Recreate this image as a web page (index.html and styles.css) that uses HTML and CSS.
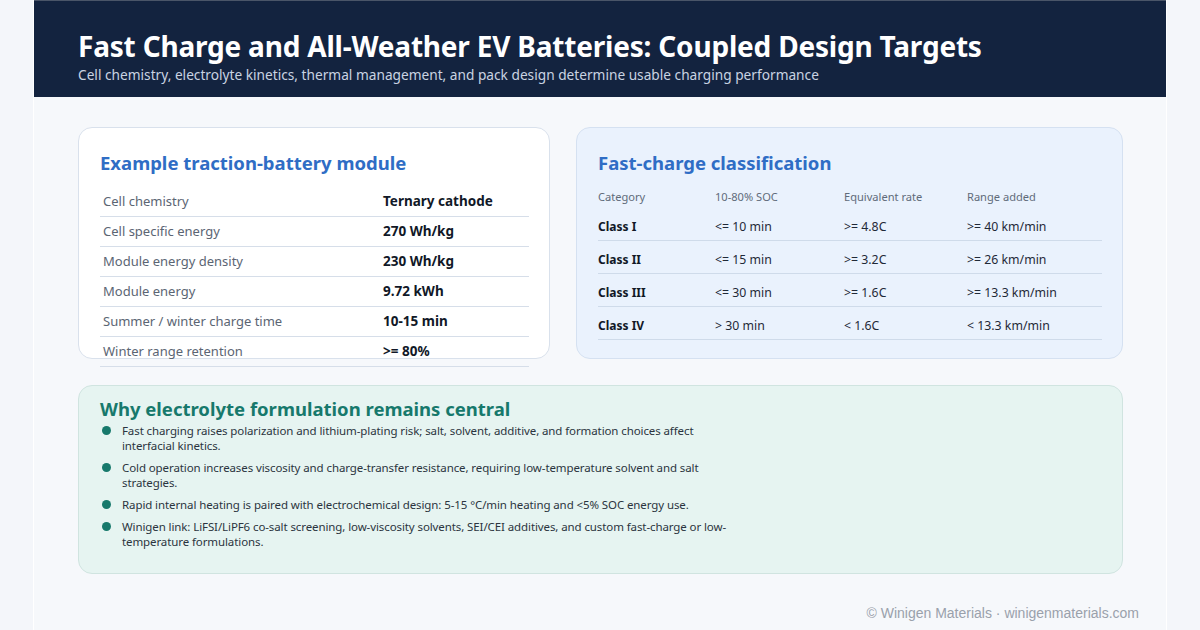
FILE: index.html
```html
<!DOCTYPE html>
<html lang="en">
<head>
<meta charset="utf-8">
<title>Fast Charge and All-Weather EV Batteries</title>
<link rel="stylesheet" href="styles.css">
</head>
<body>
<div class="page">
  <header class="hero">
    <h1>Fast Charge and All-Weather EV Batteries: Coupled Design Targets</h1>
    <p>Cell chemistry, electrolyte kinetics, thermal management, and pack design determine usable charging performance</p>
  </header>
  <main class="content">
    <div class="top-row">
      <section class="card card-module">
        <h2 class="card-title blue">Example traction-battery module</h2>
        <table class="spec">
          <tr><td>Cell chemistry</td><td>Ternary cathode</td></tr>
          <tr><td>Cell specific energy</td><td>270 Wh/kg</td></tr>
          <tr><td>Module energy density</td><td>230 Wh/kg</td></tr>
          <tr><td>Module energy</td><td>9.72 kWh</td></tr>
          <tr><td>Summer / winter charge time</td><td>10-15 min</td></tr>
          <tr><td>Winter range retention</td><td>&gt;= 80%</td></tr>
        </table>
      </section>
      <section class="card card-class">
        <h2 class="card-title blue">Fast-charge classification</h2>
        <table class="classes">
          <thead>
            <tr><th>Category</th><th>10-80% SOC</th><th>Equivalent rate</th><th>Range added</th></tr>
          </thead>
          <tbody>
            <tr><td>Class I</td><td>&lt;= 10 min</td><td>&gt;= 4.8C</td><td>&gt;= 40 km/min</td></tr>
            <tr><td>Class II</td><td>&lt;= 15 min</td><td>&gt;= 3.2C</td><td>&gt;= 26 km/min</td></tr>
            <tr><td>Class III</td><td>&lt;= 30 min</td><td>&gt;= 1.6C</td><td>&gt;= 13.3 km/min</td></tr>
            <tr><td>Class IV</td><td>&gt; 30 min</td><td>&lt; 1.6C</td><td>&lt; 13.3 km/min</td></tr>
          </tbody>
        </table>
      </section>
    </div>
    <section class="card card-why">
      <h2 class="card-title teal">Why electrolyte formulation remains central</h2>
      <ul class="points">
        <li>Fast charging raises polarization and lithium-plating risk; salt, solvent, additive, and formation choices affect interfacial kinetics.</li>
        <li>Cold operation increases viscosity and charge-transfer resistance, requiring low-temperature solvent and salt strategies.</li>
        <li>Rapid internal heating is paired with electrochemical design: 5-15 °C/min heating and &lt;5% SOC energy use.</li>
        <li>Winigen link: LiFSI/LiPF6 co-salt screening, low-viscosity solvents, SEI/CEI additives, and custom fast-charge or low-temperature formulations.</li>
      </ul>
    </section>
  </main>
  <footer class="foot">© Winigen Materials · winigenmaterials.com</footer>
</div>
</body>
</html>
```
FILE: styles.css
```css
* { box-sizing: border-box; }
html, body { margin: 0; padding: 0; }
body {
  background: #f4f6fa;
  font-family: "Noto Sans", "Open Sans", sans-serif;
  color: #1f2937;
}
.page {
  width: 1134px;
  height: 630px;
  margin: 0 auto;
  background: #f6f8fb;
  border-left: 1px solid #ffffff;
  border-right: 1px solid #ffffff;
  display: flex;
  flex-direction: column;
}
.hero {
  background: #13233f;
  border-top: 1px solid #4a5568;
  height: 97px;
  padding: 28px 44px 0 44px;
}
.hero h1 {
  margin: 0;
  font-size: 28px;
  line-height: 34px;
  font-weight: 700;
  color: #ffffff;
  letter-spacing: -0.2px;
}
.hero p {
  margin: 3px 0 0;
  font-size: 13.7px;
  line-height: 18px;
  color: #c9d3e2;
}
.content {
  padding: 30px 43px 0 44px;
}
.top-row {
  display: grid;
  grid-template-columns: 472px 547px;
  column-gap: 26px;
}
.card {
  border-radius: 14px;
  border: 1px solid #d9e1ec;
}
.card-module {
  background: #ffffff;
  height: 232px;
  padding: 22px 21px 0 21px;
}
.card-class {
  background: #eaf2fd;
  border-color: #d5e1f1;
  height: 232px;
  padding: 22px 21px 0 21px;
}
.card-title {
  margin: 0;
  font-size: 18.5px;
  line-height: 26px;
  font-weight: 700;
}
.blue { color: #2f6dc5; }
.teal { color: #17796c; }
.spec {
  margin-top: 10px;
  width: 429px;
  border-collapse: collapse;
}
.spec td {
  height: 30px;
  padding: 0 4px 0 3px;
  border-bottom: 1px solid #d6dee9;
  line-height: 18px;
  vertical-align: middle;
}
.spec td:first-child {
  width: 280px;
  font-size: 13px;
  color: #5b6573;
}
.spec td:last-child {
  font-size: 13.5px;
  font-weight: 700;
  color: #111827;
}
.classes {
  margin-top: 10px;
  width: 504px;
  border-collapse: collapse;
  font-size: 12.3px;
}
.classes th {
  text-align: left;
  font-weight: 400;
  font-size: 11.1px;
  color: #5f6b7a;
  padding: 4px 0;
  line-height: 14px;
}
.classes th:nth-child(1) { width: 117px; }
.classes th:nth-child(2) { width: 129px; }
.classes th:nth-child(3) { width: 123px; }
.classes td {
  padding: 12px 0 6px;
  line-height: 14px;
  color: #1f2937;
  border-bottom: 1px solid #cfdbea;
}
.classes td:first-child {
  font-size: 12px;
  font-weight: 700;
  color: #111827;
}
.card-why {
  margin-top: 26px;
  height: 189px;
  background: #e6f4f1;
  border-color: #d0e4e0;
  padding: 10px 21px 0 21px;
}
.card-why .card-title {
  font-size: 18.5px;
  line-height: 26px;
}
.points {
  list-style: none;
  margin: 1px 0 0;
  padding: 0;
}
.points li {
  position: relative;
  padding-left: 22px;
  max-width: 632px;
  font-size: 11.5px;
  letter-spacing: -0.1px;
  line-height: 15px;
  color: #2b3440;
  margin-bottom: 7px;
}
.points li::before {
  content: "";
  position: absolute;
  left: 2px;
  top: 3px;
  width: 9px;
  height: 9px;
  border-radius: 50%;
  background: #17796c;
}
.foot {
  margin-top: auto;
  padding: 0 27px 9px 0;
  text-align: right;
  font-family: "Liberation Sans", Arial, sans-serif;
  font-size: 14px;
  line-height: 16px;
  color: #9aa1ab;
}
```
